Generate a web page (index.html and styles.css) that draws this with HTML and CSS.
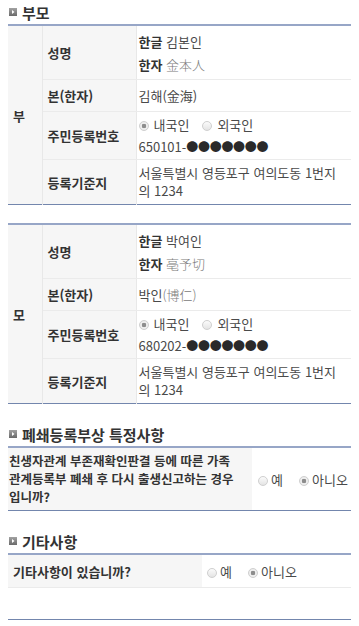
FILE: index.html
```html
<!DOCTYPE html>
<html lang="ko">
<head>
<meta charset="utf-8">
<title>부모</title>
<link rel="stylesheet" href="styles.css">
</head>
<body>
<section class="sec first">
  <h2 class="sec-title"><svg class="ico" viewBox="0 0 8 8" width="8" height="8"><defs><linearGradient id="g1" x1="0" y1="0" x2="0" y2="1"><stop offset="0" stop-color="#a2a2a2"/><stop offset="1" stop-color="#6a6a6a"/></linearGradient></defs><rect width="8" height="8" fill="url(#g1)"/><path d="M3 2 L5.5 4 L3 6 Z" fill="#fff"/></svg>부모</h2>
  <table class="grid family">
    <colgroup><col class="c-who"><col class="c-label"><col></colgroup>
    <tr class="r-name">
      <th rowspan="4" class="who">부</th>
      <th class="label">성명</th>
      <td class="val"><div><b>한글</b> 김본인</div><div><b>한자</b> <span class="hanja">金本人</span></div></td>
    </tr>
    <tr class="r-bon">
      <th class="label">본(한자)</th>
      <td class="val">김해(金海)</td>
    </tr>
    <tr class="r-jumin">
      <th class="label">주민등록번호</th>
      <td class="val"><div><span class="opt"><span class="radio on"></span>내국인</span><span class="opt"><span class="radio"></span>외국인</span></div><div>650101-<span class="dots">●●●●●●●</span></div></td>
    </tr>
    <tr class="r-addr">
      <th class="label">등록기준지</th>
      <td class="val">서울특별시 영등포구 여의도동 1번지의 1234</td>
    </tr>
  </table>
</section>

<section class="sec">
  <table class="grid family">
    <colgroup><col class="c-who"><col class="c-label"><col></colgroup>
    <tr class="r-name">
      <th rowspan="4" class="who">모</th>
      <th class="label">성명</th>
      <td class="val"><div><b>한글</b> 박여인</div><div><b>한자</b> <span class="hanja">亳予切</span></div></td>
    </tr>
    <tr class="r-bon">
      <th class="label">본(한자)</th>
      <td class="val">박인<span class="hanja">(博仁)</span></td>
    </tr>
    <tr class="r-jumin">
      <th class="label">주민등록번호</th>
      <td class="val"><div><span class="opt"><span class="radio on"></span>내국인</span><span class="opt"><span class="radio"></span>외국인</span></div><div>680202-<span class="dots">●●●●●●●</span></div></td>
    </tr>
    <tr class="r-addr">
      <th class="label">등록기준지</th>
      <td class="val">서울특별시 영등포구 여의도동 1번지의 1234</td>
    </tr>
  </table>
</section>

<section class="sec">
  <h2 class="sec-title"><svg class="ico" viewBox="0 0 8 8" width="8" height="8"><rect width="8" height="8" fill="url(#g1)"/><path d="M3 2 L5.5 4 L3 6 Z" fill="#fff"/></svg>폐쇄등록부상 특정사항</h2>
  <table class="grid q">
    <colgroup><col class="c-q"><col></colgroup>
    <tr class="r-q">
      <th class="qlabel">친생자관계 부존재확인판결 등에 따른 가족<br>관계등록부 폐쇄 후 다시 출생신고하는 경우<br>입니까?</th>
      <td class="qval"><span class="opt"><span class="radio"></span>예</span><span class="opt"><span class="radio on"></span>아니오</span></td>
    </tr>
  </table>
</section>

<section class="sec">
  <h2 class="sec-title"><svg class="ico" viewBox="0 0 8 8" width="8" height="8"><rect width="8" height="8" fill="url(#g1)"/><path d="M3 2 L5.5 4 L3 6 Z" fill="#fff"/></svg>기타사항</h2>
  <table class="grid etc">
    <colgroup><col class="c-etc"><col></colgroup>
    <tr class="r-etc">
      <th class="elabel">기타사항이 있습니까?</th>
      <td class="eval"><span class="opt"><span class="radio"></span>예</span><span class="opt"><span class="radio on"></span>아니오</span></td>
    </tr>
    <tr class="r-empty">
      <td colspan="2" class="empty"></td>
    </tr>
  </table>
</section>
</body>
</html>
```
FILE: styles.css
```css
html, body {
  background: #fff;
}
body {
  margin: 0;
  padding: 0 8px;
  font-family: "Noto Sans CJK KR", "Noto Sans", sans-serif;
  font-size: 13px;
  color: #4a4a4a;
}
.sec {
  margin-top: 18px;
}
.sec.first {
  margin-top: 0;
}
.sec-title {
  margin: 0;
  height: 24px;
  display: flex;
  align-items: center;
  gap: 5px;
  padding-left: 1px;
  font-size: 15px;
  font-weight: bold;
  color: #333;
}
.ico {
  flex: none;
}
.grid {
  width: 100%;
  border-collapse: collapse;
  table-layout: fixed;
  border-top: 2px solid #97a6c7;
  border-bottom: 1px solid #7386ad;
}
.grid th,
.grid td {
  padding: 0 6px 0 2px;
  vertical-align: middle;
  text-align: left;
  border-bottom: 1px solid #ebebeb;
}
.grid tr:last-child th,
.grid tr:last-child td {
  border-bottom: none;
}
.grid th {
  background: #f6f6f6;
  font-weight: bold;
  color: #333;
}
.c-who { width: 34px; }
.c-label { width: 94px; }
.grid .who {
  padding-left: 5px;
  border-right: 1px solid #e8e8e8;
  border-bottom: none;
}
.grid .label {
  padding-left: 5px;
  border-right: 1px solid #e8e8e8;
}
.val b {
  color: #333;
}
.hanja {
  color: #7a7a7a;
  font-family: "Noto Sans CJK TC", "Noto Sans CJK KR", serif;
  font-weight: 300;
}
.r-name td, .r-name th.label { height: 53px; }
.r-name .val { line-height: 23px; }
.r-bon td { height: 31px; line-height: 20px; }
.r-jumin td { height: 47px; }
.r-jumin .val { line-height: 22px; }
.r-addr td { height: 44px; line-height: 18px; }
.opt {
  display: inline-block;
  margin-right: 13px;
  white-space: nowrap;
}
.radio {
  display: inline-block;
  width: 8px;
  height: 8px;
  border-radius: 50%;
  border: 1px solid #d0d0d0;
  background: linear-gradient(#fbfbfb, #e4e4e4);
  vertical-align: -1px;
  margin-right: 5px;
}
.radio.on {
  background: radial-gradient(circle, #8d8d8d 0 2px, #f2f2f2 2.6px, #e0e0e0 100%);
}
.dots {
  color: #2a2a2a;
  font-size: 12px;
  letter-spacing: -0.3px;
}
.c-q { width: 244px; }
.grid .qlabel {
  height: 62px;
  padding: 0 0 0 1px;
  font-size: 12.5px;
  line-height: 18.2px;
  white-space: nowrap;
}
.grid .qval {
  padding: 0 0 0 6px;
  white-space: nowrap;
}
.q .opt,
.etc .opt {
  margin-right: 16px;
}
.q .radio,
.etc .radio {
  margin-right: 3px;
}
.q .opt:last-child,
.etc .opt:last-child {
  margin-right: 0;
}
.c-etc { width: 194px; }
.grid .elabel {
  height: 32px;
  padding-left: 5px;
}
.grid .eval {
  padding-left: 5px;
  white-space: nowrap;
}
.grid .empty {
  height: 31px;
  background: #fff;
}
```
